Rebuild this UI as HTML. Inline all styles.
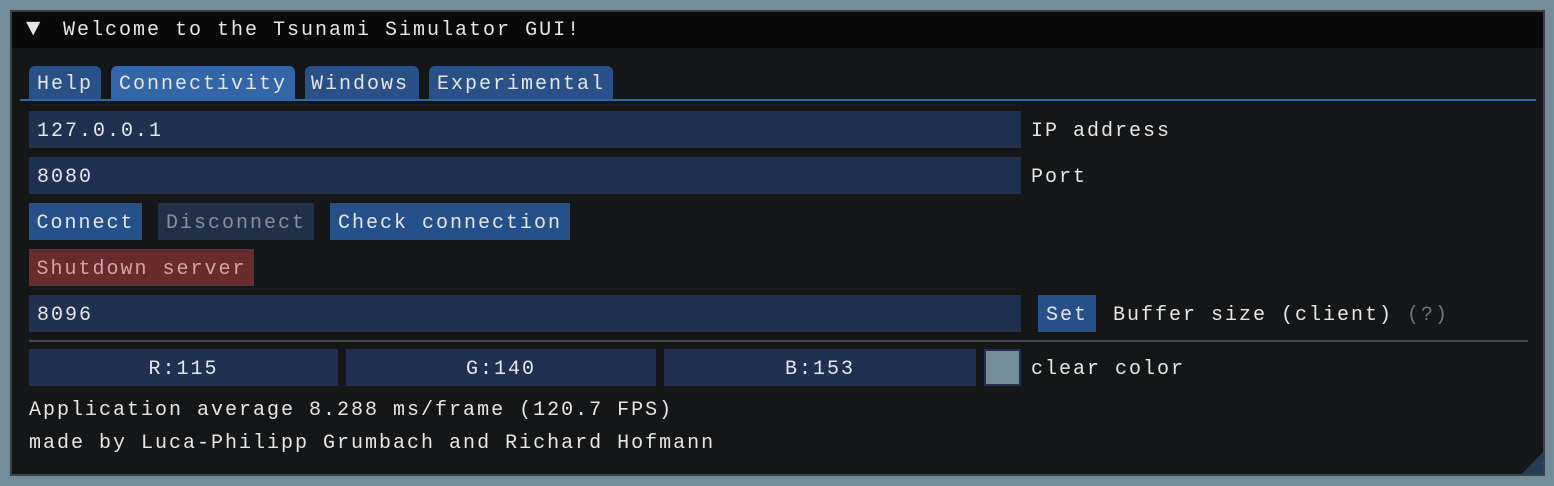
<!DOCTYPE html>
<html><head><style>
body{margin:0;width:1554px;height:486px;background:#738c99;position:relative;overflow:hidden;font-family:"Liberation Mono","DejaVu Sans Mono",monospace;font-size:20px;letter-spacing:2px;color:#e6e6e6}
.a{position:absolute;box-sizing:border-box;white-space:pre;line-height:41px}
.win{left:10px;top:10px;width:1535px;height:466px;background:#151617;border:2px solid #3c3f45}
.title{left:12px;top:12px;width:1531px;height:36px;background:#0a0a0a;line-height:38px}
.tab{top:66px;height:34px;line-height:38px;background:#2a5088;border-radius:6px 6px 0 0;padding-left:8px}
.in{background:#1f3050;height:37px;padding-left:8px}
.btn{background:#26508a;height:37px;text-align:center}
</style></head><body>
<div class="a win"></div>
<div class="a title"><span style="position:absolute;left:14px;top:-1px;font-size:24px;letter-spacing:0">▼</span><span style="position:absolute;left:51px;top:0">Welcome to the Tsunami Simulator GUI!</span></div>
<div class="a tab" style="left:29px;width:72px">Help</div>
<div class="a tab" style="left:111px;width:184px;background:#3266a8">Connectivity</div>
<div class="a tab" style="left:305px;width:114px;padding-left:6px">Windows</div>
<div class="a tab" style="left:429px;width:184px">Experimental</div>
<div class="a" style="left:20px;top:99px;width:1516px;height:2px;background:#3266a8"></div>
<div class="a in" style="left:29px;top:111px;width:992px">127.0.0.1</div>
<div class="a" style="left:1031px;top:111px">IP address</div>
<div class="a in" style="left:29px;top:157px;width:992px">8080</div>
<div class="a" style="left:1031px;top:157px">Port</div>
<div class="a btn" style="left:29px;top:203px;width:113px">Connect</div>
<div class="a btn" style="left:158px;top:203px;width:156px;background:#1f3048;color:#8a8f96">Disconnect</div>
<div class="a btn" style="left:330px;top:203px;width:240px">Check connection</div>
<div class="a btn" style="left:29px;top:249px;width:225px;background:#6a2b2c;color:#d4a3a3">Shutdown server</div>
<div class="a in" style="left:29px;top:295px;width:992px">8096</div>
<div class="a btn" style="left:1038px;top:295px;width:58px">Set</div>
<div class="a" style="left:1113px;top:295px">Buffer size (client) <span style="color:#6f7378">(?)</span></div>
<div class="a" style="left:29px;top:340px;width:1499px;height:2px;background:#44474d"></div>
<div class="a in" style="left:29px;top:349px;width:309px;text-align:center;padding:0">R:115</div>
<div class="a in" style="left:346px;top:349px;width:310px;text-align:center;padding:0">G:140</div>
<div class="a in" style="left:664px;top:349px;width:312px;text-align:center;padding:0">B:153</div>
<div class="a" style="left:984px;top:349px;width:37px;height:37px;background:#738c99;border:2px solid #1f3050"></div>
<div class="a" style="left:1031px;top:349px">clear color</div>
<div class="a" style="left:29px;top:390px">Application average 8.288 ms/frame (120.7 FPS)</div>
<div class="a" style="left:29px;top:423px">made by Luca-Philipp Grumbach and Richard Hofmann</div>
<svg class="a" style="left:1522px;top:452px;line-height:0" width="21" height="22"><polygon points="21,0 21,22 0,22" fill="#233a58"/></svg>
</body></html>
